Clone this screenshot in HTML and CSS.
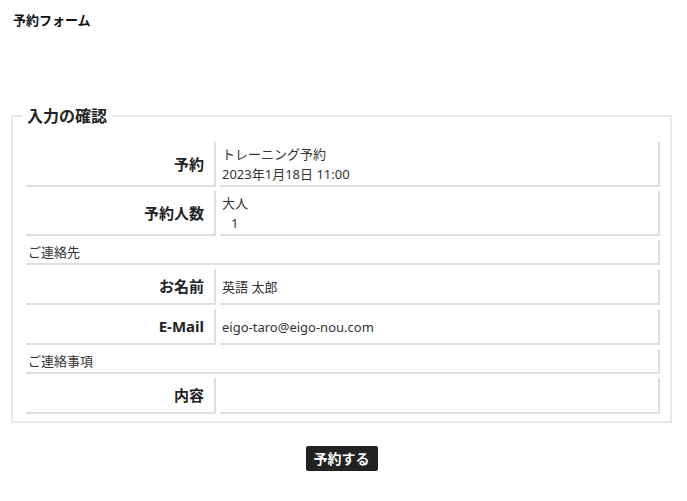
FILE: index.html
```html
<!DOCTYPE html>
<html lang="ja">
<head>
<meta charset="utf-8">
<title>予約フォーム</title>
<link rel="stylesheet" href="styles.css">
</head>
<body>
<div class="page">
  <h1 class="title">予約フォーム</h1>
  <form class="form">
    <fieldset class="confirm">
      <legend class="confirm-legend">入力の確認</legend>
      <table class="confirm-table">
        <tbody>
          <tr>
            <th class="label">予約</th>
            <td class="value">トレーニング予約<br>2023年1月18日 11:00</td>
          </tr>
          <tr>
            <th class="label">予約人数</th>
            <td class="value">大人<div class="count">1</div></td>
          </tr>
          <tr>
            <td class="section" colspan="2">ご連絡先</td>
          </tr>
          <tr>
            <th class="label">お名前</th>
            <td class="value">英語 太郎</td>
          </tr>
          <tr>
            <th class="label">E-Mail</th>
            <td class="value">eigo-taro@eigo-nou.com</td>
          </tr>
          <tr>
            <td class="section" colspan="2">ご連絡事項</td>
          </tr>
          <tr>
            <th class="label">内容</th>
            <td class="value"></td>
          </tr>
        </tbody>
      </table>
    </fieldset>
    <div class="actions">
      <button type="button" class="submit">予約する</button>
    </div>
  </form>
</div>
</body>
</html>
```

FILE: styles.css
```css
html, body {
  margin: 0;
  padding: 0;
  background: #fff;
}

body {
  font-family: "Noto Sans", "Noto Sans CJK JP", "DejaVu Sans", sans-serif;
  color: #333;
}

.page {
  padding: 10px 15px 0 11px;
}

.title {
  margin: 0 0 0 2px;
  font-size: 13px;
  line-height: 20px;
  font-weight: bold;
  color: #111;
}

.form {
  margin: 0;
}

.confirm {
  margin: 76px 0 0 0;
  padding: 12px 6px 3px 9px;
  border: 2px solid #e8e8e8;
  min-width: 0;
}

.confirm-legend {
  padding: 0 5px;
  font-size: 16px;
  line-height: 20px;
  font-weight: bold;
  color: #222;
}

.confirm-table {
  width: 100%;
  border-collapse: separate;
  border-spacing: 4px;
  font-size: 13px;
  line-height: 20px;
}

.label,
.value,
.section {
  border-right: 2px solid #dedede;
  border-bottom: 2px solid #dedede;
  vertical-align: middle;
}

.label {
  box-sizing: border-box;
  width: 190px;
  padding: 7px 10px 7px 4px;
  text-align: right;
  font-size: 15px;
  font-weight: bold;
  color: #222;
}

.value {
  padding: 2px 4px 1px 2px;
  text-align: left;
}

.section {
  padding: 2px 4px 1px 2px;
  text-align: left;
}

.count {
  padding-left: 9px;
}

.actions {
  padding-top: 23px;
  text-align: center;
}

.submit {
  margin: 0;
  padding: 0 8px;
  height: 25px;
  border: none;
  border-radius: 2px;
  background: #222;
  color: #fff;
  font-family: "Noto Sans", "Noto Sans CJK JP", sans-serif;
  font-size: 14px;
  line-height: 25px;
  font-weight: bold;
  cursor: pointer;
}
```
